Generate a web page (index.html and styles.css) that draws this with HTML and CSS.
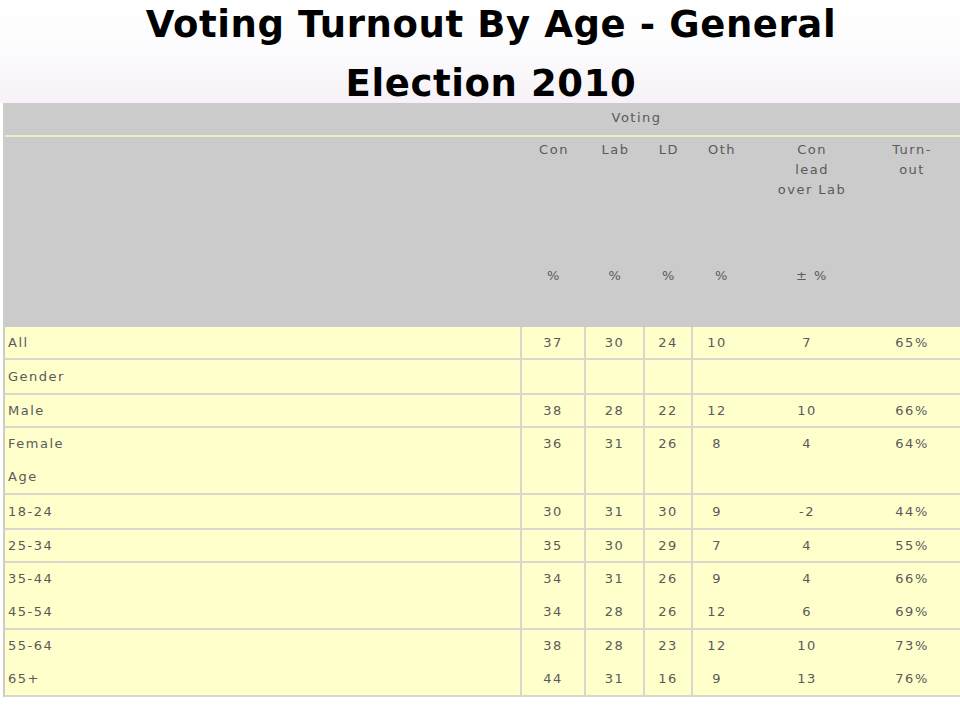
FILE: index.html
```html
<!DOCTYPE html>
<html lang="en">
<head>
<meta charset="utf-8">
<title>Voting Turnout By Age - General Election 2010</title>
<link rel="stylesheet" href="styles.css">
</head>
<body>
<header class="title-area">
  <h1 class="title">Voting Turnout By Age - General<br>Election 2010</h1>
</header>
<table class="poll">
  <colgroup>
    <col class="c-label">
    <col class="c-con">
    <col class="c-lab">
    <col class="c-ld">
    <col class="c-oth">
    <col class="c-lead">
    <col class="c-turn">
  </colgroup>
  <thead>
    <tr class="h-top">
      <th></th>
      <th colspan="4">Voting</th>
      <th colspan="2"></th>
    </tr>
    <tr class="h-names">
      <th rowspan="2"></th>
      <th>Con</th>
      <th>Lab</th>
      <th>LD</th>
      <th>Oth</th>
      <th>Con<br>lead<br>over Lab</th>
      <th class="turn">Turn-<br>out</th>
    </tr>
    <tr class="h-units">
      <th>%</th>
      <th>%</th>
      <th>%</th>
      <th>%</th>
      <th>± %</th>
      <th class="turn"></th>
    </tr>
  </thead>
  <tbody>
    <tr class="lh30">
      <td class="label">All</td><td class="vl">37</td><td class="vl">30</td><td class="vl">24</td><td class="oth">10</td><td class="lead">7</td><td class="turn">65%</td>
    </tr>
    <tr class="lh33">
      <td class="label">Gender</td><td class="vl"></td><td class="vl"></td><td class="vl"></td><td class="oth"></td><td class="lead"></td><td class="turn"></td>
    </tr>
    <tr class="lh31">
      <td class="label">Male</td><td class="vl">38</td><td class="vl">28</td><td class="vl">22</td><td class="oth">12</td><td class="lead">10</td><td class="turn">66%</td>
    </tr>
    <tr class="lh32">
      <td class="label">Female<br>Age</td><td class="vl">36</td><td class="vl">31</td><td class="vl">26</td><td class="oth">8</td><td class="lead">4</td><td class="turn">64%</td>
    </tr>
    <tr class="lh33">
      <td class="label">18-24</td><td class="vl">30</td><td class="vl">31</td><td class="vl">30</td><td class="oth">9</td><td class="lead">-2</td><td class="turn">44%</td>
    </tr>
    <tr class="lh31">
      <td class="label">25-34</td><td class="vl">35</td><td class="vl">30</td><td class="vl">29</td><td class="oth">7</td><td class="lead">4</td><td class="turn">55%</td>
    </tr>
    <tr class="lh32">
      <td class="label">35-44<br>45-54</td><td class="vl">34<br>34</td><td class="vl">31<br>28</td><td class="vl">26<br>26</td><td class="oth">9<br>12</td><td class="lead">4<br>6</td><td class="turn">66%<br>69%</td>
    </tr>
    <tr class="lh32">
      <td class="label">55-64<br>65+</td><td class="vl">38<br>44</td><td class="vl">28<br>31</td><td class="vl">23<br>16</td><td class="oth">12<br>9</td><td class="lead">10<br>13</td><td class="turn">73%<br>76%</td>
    </tr>
  </tbody>
</table>
</body>
</html>
```

FILE: styles.css
```css
html, body {
  margin: 0;
  padding: 0;
  overflow: hidden;
  background: #ffffff;
}

body {
  width: 960px;
  height: 720px;
}

.title-area {
  height: 103px;
  box-sizing: border-box;
  padding-top: 5px;
  padding-left: 22px;
  display: flex;
  flex-direction: column;
  justify-content: center;
  align-items: center;
  background: linear-gradient(#ffffff 0%, #fcfbfd 50%, #f6f2f7 100%);
  overflow: visible;
}

.title {
  margin: 0;
  font-family: "Comic Sans MS", "DejaVu Sans", sans-serif;
  font-weight: bold;
  font-size: 37px;
  letter-spacing: 0.6px;
  line-height: 59px;
  text-align: center;
  color: #000000;
  white-space: nowrap;
}

.poll {
  margin-left: 3px;
  width: 997px;
  table-layout: fixed;
  border-collapse: separate;
  border-spacing: 0;
  border-left: 2px solid #cdcdc8;
  font-family: "DejaVu Sans", Verdana, sans-serif;
  font-size: 13px;
  letter-spacing: 1.5px;
  color: #5a5a5a;
}

.c-label { width: 517px; }
.c-con { width: 64px; }
.c-lab { width: 59px; }
.c-ld { width: 48px; }
.c-oth { width: 58px; }
.c-lead { width: 122px; }
.c-turn { width: 127px; }

.poll th {
  background: #cbcbcb;
  font-weight: normal;
  padding: 0;
  text-align: center;
  vertical-align: top;
}

.h-top th {
  box-sizing: border-box;
  height: 34px;
  line-height: 30px;
  border-bottom: 2px solid #efedc8;
}

.h-names th {
  height: 123px;
  padding-top: 3px;
  line-height: 20px;
}

.h-units th {
  height: 61px;
  padding-top: 3px;
  line-height: 20px;
}

.poll td {
  background: #ffffcc;
  padding: 0;
  text-align: center;
  vertical-align: top;
  border-bottom: 2px solid #d9d7cb;
}

.poll td.label {
  text-align: left;
  padding-left: 3px;
}

.poll td.label,
.poll td.vl {
  border-right: 2px solid #d9d7cb;
}

.poll td.oth {
  padding-right: 10px;
}

.poll td.lead {
  padding-right: 10px;
}

.poll .turn {
  padding-right: 49px;
}

.lh30 td { line-height: 31px; }
.lh31 td { line-height: 31px; }
.lh33 td { line-height: 33px; }
.lh32 td { line-height: 32.5px; }
```
